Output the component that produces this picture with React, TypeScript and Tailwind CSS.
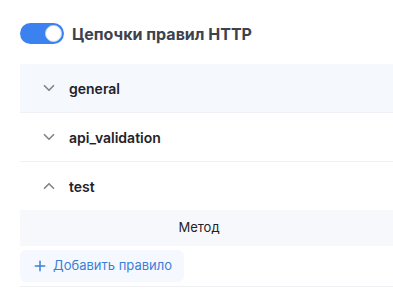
import { ChevronDown, ChevronUp, Plus } from 'lucide-react';

const groups = [
  { name: 'general', open: false, active: true },
  { name: 'api_validation', open: false, active: false },
  { name: 'test', open: true, active: false },
];

function Toggle() {
  return (
    <div className="relative h-[21px] w-[44px] rounded-full bg-[#3b82f0]">
      <div className="absolute right-[2px] top-[2px] h-[17px] w-[17px] rounded-full border border-[#d1d5db] bg-white" />
    </div>
  );
}

export default function App() {
  return (
    <div
      className="h-[297px] w-[393px] overflow-hidden bg-white pl-5 pt-[23px]"
      style={{ fontFamily: 'Inter, "Noto Sans", sans-serif' }}
    >
      <div className="flex h-[21px] items-center gap-2">
        <Toggle />
        <span className="text-[16px] font-bold leading-5 text-[#3d424d]">Цепочки правил HTTP</span>
      </div>

      <div className="mt-[20px]">
        {groups.map((g) => (
          <div key={g.name} className="border-b border-[#eef0f3]">
            <div
              className={
                'flex h-[48px] items-center pl-[20px] ' + (g.active ? 'bg-[#f5f9fe]' : 'bg-white')
              }
            >
              <span className="flex w-[29px] items-center text-[#80858e]">
                {g.open ? (
                  <ChevronUp size={18} strokeWidth={2.25} />
                ) : (
                  <ChevronDown size={18} strokeWidth={2.25} />
                )}
              </span>
              <span className="text-[14px] font-semibold text-[#1f2329]">{g.name}</span>
            </div>
            {g.open && (
              <div className="pb-[4px]">
                <div className="flex h-[36px] w-full items-center bg-[#f7f8fb]">
                  <div className="w-[358px] text-center text-[13px] text-[#1f2329]">Метод</div>
                </div>
                <button className="mt-1 flex h-[32px] w-[164px] items-center gap-[5px] rounded-md bg-[#f5f8fe] pl-[12px] text-[13px] text-[#3b7fd9]">
                  <Plus size={16} strokeWidth={2.25} />
                  Добавить правило
                </button>
              </div>
            )}
          </div>
        ))}
      </div>
    </div>
  );
}
